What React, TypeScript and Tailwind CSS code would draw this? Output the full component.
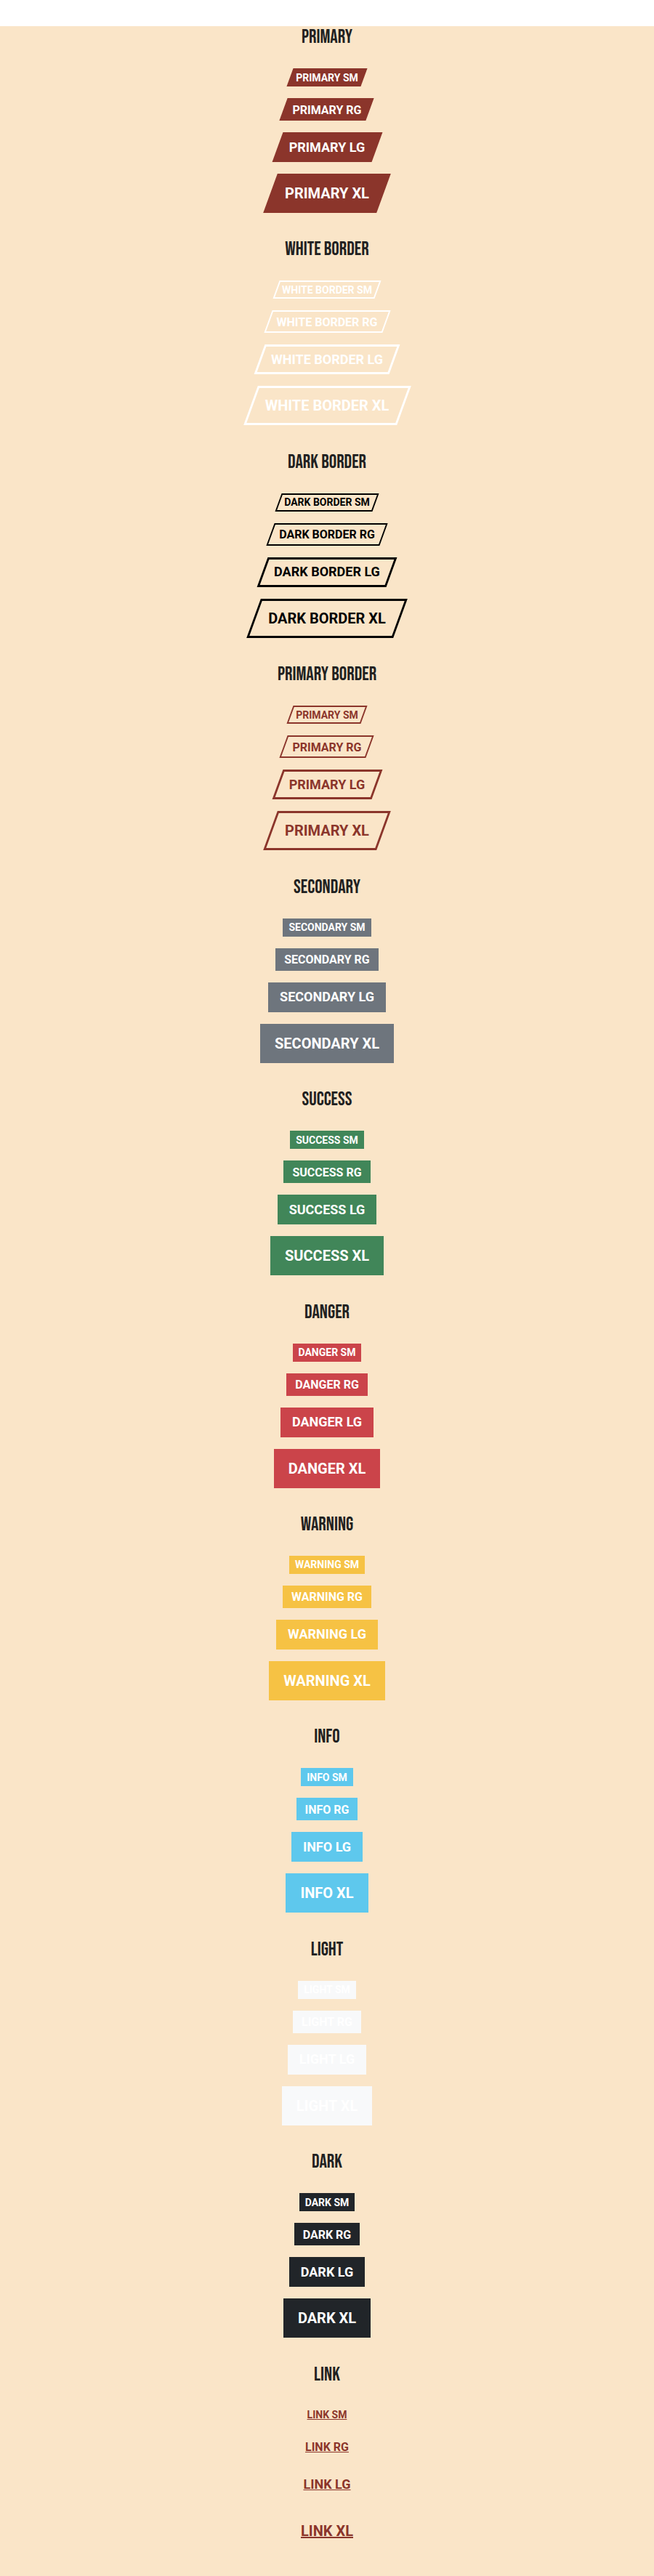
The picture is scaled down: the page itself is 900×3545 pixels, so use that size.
type Shape = "box" | "slant" | "outline" | "link";

interface Variant {
  title: string;
  label: string;
  shape: Shape;
  color: string;
}

const variants: Variant[] = [
  { title: "Primary", label: "Primary", shape: "slant", color: "text-white before:bg-[#8b352b]" },
  { title: "White Border", label: "White Border", shape: "outline", color: "text-white before:border-white" },
  { title: "Dark Border", label: "Dark Border", shape: "outline", color: "text-black before:border-black" },
  { title: "Primary Border", label: "Primary", shape: "outline", color: "text-[#8b352b] before:border-[#8b352b]" },
  { title: "Secondary", label: "Secondary", shape: "box", color: "text-white bg-[#6e757d]" },
  { title: "Success", label: "Success", shape: "box", color: "text-white bg-[#418659]" },
  { title: "Danger", label: "Danger", shape: "box", color: "text-white bg-[#cb444a]" },
  { title: "Warning", label: "Warning", shape: "box", color: "text-white bg-[#f6c244]" },
  { title: "Info", label: "Info", shape: "box", color: "text-white bg-[#5ec8ed]" },
  { title: "Light", label: "Light", shape: "box", color: "text-white bg-[#f8f9fa]" },
  { title: "Dark", label: "Dark", shape: "box", color: "text-white bg-[#212529]" },
  { title: "Link", label: "Link", shape: "link", color: "text-[#8b352b]" },
];

const sizes = [
  { name: "SM", box: "h-[25px] px-2 text-[14px]", border: "before:border-2" },
  { name: "RG", box: "h-[31px] px-3 pt-0.5 text-[16px]", border: "before:border-2" },
  { name: "LG", box: "h-[41px] px-4 text-[18px]", border: "before:border-3" },
  { name: "XL", box: "h-[54px] px-5 text-[20px]", border: "before:border-3" },
];

const slanted = "relative isolate before:absolute before:inset-0 before:-z-10 before:-skew-x-20";

function VariantButton({ variant, size }: { variant: Variant; size: (typeof sizes)[number] }) {
  const base = `inline-flex cursor-pointer items-center justify-center font-bold uppercase leading-none whitespace-nowrap ${size.box} ${variant.color}`;
  const text = `${variant.label} ${size.name}`;
  if (variant.shape === "link") {
    return (
      <a href="#link" className={`${base} underline`}>
        {text}
      </a>
    );
  }
  const extra =
    variant.shape === "slant" ? slanted : variant.shape === "outline" ? `${slanted} ${size.border}` : "";
  return (
    <button type="button" className={`${base} ${extra}`}>
      {text}
    </button>
  );
}

export default function App() {
  return (
    <div className="flex min-h-screen flex-col bg-white pt-9 font-[Roboto,sans-serif]">
      <main className="flex flex-1 flex-col bg-[#fae5c8]">
        {variants.map((variant) => (
          <section key={variant.title} className="flex flex-1 flex-col items-center">
            <h2 className="mb-[26px] font-['Bebas_Neue','Roboto_Condensed','Liberation_Sans_Narrow',sans-serif] text-[26px] leading-8 font-normal text-[#212121] uppercase">
              {variant.title}
            </h2>
            <div className="flex flex-col items-center gap-4 pb-8">
              {sizes.map((size) => (
                <VariantButton key={size.name} variant={variant} size={size} />
              ))}
            </div>
          </section>
        ))}
      </main>
    </div>
  );
}
